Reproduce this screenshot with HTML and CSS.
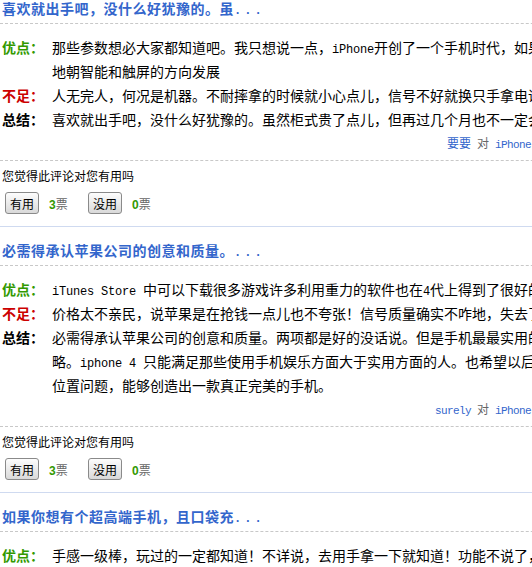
FILE: index.html
```html
<!doctype html>
<html lang="zh-CN">
  <head>
    <meta charset="UTF-8" />
    <meta name="viewport" content="width=device-width, initial-scale=1.0" />
    <title>iPhone 4 网友点评</title>
    <link rel="stylesheet" href="styles.css">
  </head>
  <body>
    <div class="reviews">
      <div class="review">
        <h3 class="review-title"><a href="#">喜欢就出手吧，没什么好犹豫的。虽<span class="en">...</span></a></h3>
        <div class="review-body">
          <div class="review-row">
            <span class="label good">优点：</span>
            <p>那些参数想必大家都知道吧。我只想说一点，<span class="en">iPhone</span>开创了一个手机时代，如果没有它手机不会这么快地朝智能和触屏的方向发展</p>
          </div>
          <div class="review-row">
            <span class="label bad">不足：</span>
            <p>人无完人，何况是机器。不耐摔拿的时候就小心点儿，信号不好就换只手拿电话吧。</p>
          </div>
          <div class="review-row">
            <span class="label">总结：</span>
            <p>喜欢就出手吧，没什么好犹豫的。虽然柜式贵了点儿，但再过几个月也不一定会降价。</p>
          </div>
        </div>
        <div class="review-meta">
          <a href="#">要要</a><span class="en"> </span>对<a href="#" class="en"> iPhone 4 (16GB) </a>发表的产品点评
        </div>
        <div class="review-vote">
          <p>您觉得此评论对您有用吗</p>
          <div class="vote-buttons">
            <div class="vote"><button>有用</button><span class="count"><b>3</b>票</span></div>
            <div class="vote"><button>没用</button><span class="count"><b>0</b>票</span></div>
          </div>
        </div>
      </div>

      <div class="review">
        <h3 class="review-title"><a href="#">必需得承认苹果公司的创意和质量。<span class="en">...</span></a></h3>
        <div class="review-body">
          <div class="review-row">
            <span class="label good">优点：</span>
            <p><span class="en">iTunes Store </span>中可以下载很多游戏许多利用重力的软件也在<span class="en">4</span>代上得到了很好的体现。</p>
          </div>
          <div class="review-row">
            <span class="label bad">不足：</span>
            <p>价格太不亲民，说苹果是在抢钱一点儿也不夸张！信号质量确实不咋地，失去了一些信号。</p>
          </div>
          <div class="review-row">
            <span class="label">总结：</span>
            <p>必需得承认苹果公司的创意和质量。两项都是好的没话说。但是手机最最实用的通话功能反而被苹果忽略。<span class="en">iphone 4 </span>只能满足那些使用手机娱乐方面大于实用方面的人。也希望以后苹果多考虑一下天线的位置问题，能够创造出一款真正完美的手机。</p>
          </div>
        </div>
        <div class="review-meta">
          <a href="#" class="en">surely </a>对<a href="#" class="en"> iPhone 4 (16GB) </a>发表的产品点评
        </div>
        <div class="review-vote">
          <p>您觉得此评论对您有用吗</p>
          <div class="vote-buttons">
            <div class="vote"><button>有用</button><span class="count"><b>3</b>票</span></div>
            <div class="vote"><button>没用</button><span class="count"><b>0</b>票</span></div>
          </div>
        </div>
      </div>

      <div class="review">
        <h3 class="review-title"><a href="#">如果你想有个超高端手机，且口袋充<span class="en">...</span></a></h3>
        <div class="review-body">
          <div class="review-row">
            <span class="label good">优点：</span>
            <p>手感一级棒，玩过的一定都知道！不详说，去用手拿一下就知道！功能不说了，大家都清楚。</p>
          </div>
          <div class="review-row">
            <span class="label bad">不足：</span>
            <p>贵，真的很贵。</p>
          </div>
        </div>
      </div>
    </div>
  </body>
</html>
```

FILE: styles.css
```css
body {
  margin: 0;
  overflow: hidden;
  background: #fff;
  color: #000;
  font-family: "Noto Sans CJK SC", sans-serif;
  font-size: 14px;
  text-autospace: no-autospace;
}

a {
  color: #3366cc;
  text-decoration: none;
}

.en {
  font-family: "Liberation Mono", monospace;
  font-size: 12px;
  letter-spacing: -0.2px;
  line-height: 1;
}

.reviews {
  width: 684px;
  margin-top: -16px;
}

.review {
  border-top: 1px solid #cfdaf0;
  padding-top: 11px;
  padding-bottom: 12px;
}

.review-title {
  margin: 0;
  padding: 0 0 3px 2px;
  font-size: 14px;
  line-height: 24px;
  letter-spacing: 0.5px;
  border-bottom: 1px dashed #c8c8c8;
}

.review-title .en {
  font-weight: bold;
  letter-spacing: 3px;
}

.review-body {
  padding: 11px 0 0 2px;
}

.review-row {
  display: grid;
  grid-template-columns: 50px 632px;
  line-height: 24px;
}

.review-row p {
  margin: 0;
}

.label {
  font-weight: bold;
}

.good {
  color: #339900;
}

.bad {
  color: #cc0000;
}

.review-meta {
  margin-top: 3px;
  padding: 0 9px 8px 0;
  font-size: 12px;
  line-height: 18px;
  color: #666;
  text-align: right;
  border-bottom: 1px dashed #c8c8c8;
}

.review-meta .en {
  font-size: 11px;
  letter-spacing: -0.6px;
}

.review-vote {
  padding: 6px 0 0 2px;
  font-size: 12px;
}

.review-vote p {
  margin: 0;
  line-height: 18px;
}

.vote-buttons {
  display: grid;
  grid-template-columns: repeat(2, 83px);
  margin-top: 7px;
  padding-left: 3px;
}

.vote {
  display: flex;
  align-items: center;
  gap: 10px;
}

.vote button {
  width: 34px;
  height: 22px;
  padding: 0;
  border: 1px solid #8a8a8a;
  border-radius: 3px;
  background: linear-gradient(#fdfdfd, #d9d9d9);
  color: #000;
  font-family: inherit;
  font-size: 12px;
  cursor: pointer;
}

.count {
  color: #666;
}

.count b {
  color: #339900;
  font-family: "Liberation Sans", sans-serif;
}
```
